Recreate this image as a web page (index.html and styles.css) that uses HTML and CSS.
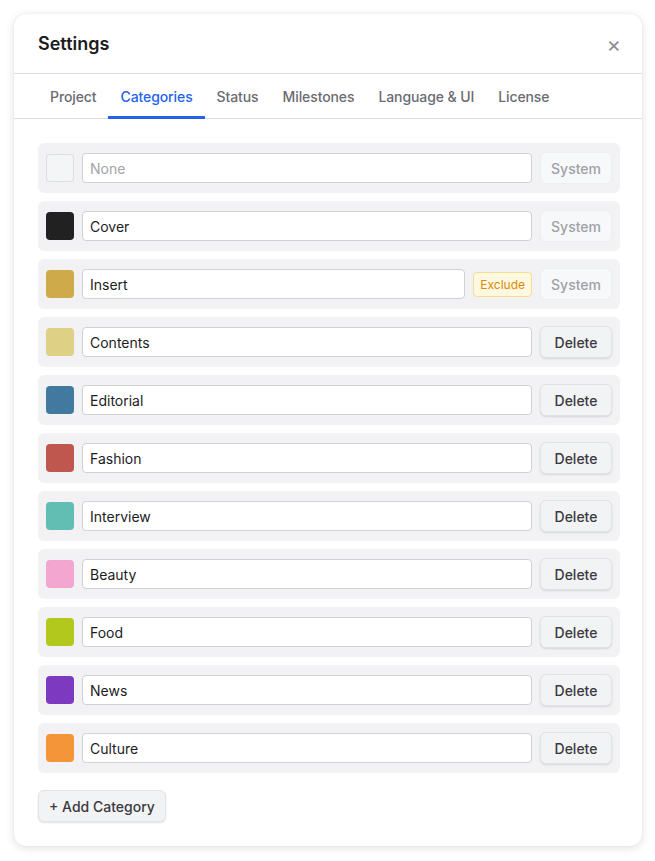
FILE: index.html
```html
<!DOCTYPE html>
<html lang="en">
<head>
    <meta charset="UTF-8">
    <meta name="viewport" content="width=device-width, initial-scale=1.0">
    <title>Settings</title>
    <link rel="stylesheet" href="styles.css">
</head>
<body>
    <div class="modal">
        <div class="modal-header">
            <h2>Settings</h2>
            <span class="close">&times;</span>
        </div>

        <div class="tabs">
            <div class="tab">Project</div>
            <div class="tab active">Categories</div>
            <div class="tab">Status</div>
            <div class="tab">Milestones</div>
            <div class="tab">Language &amp; UI</div>
            <div class="tab">License</div>
        </div>

        <div class="modal-body">
            <div class="cat-row">
                <span class="swatch empty"></span>
                <input type="text" class="cat-name" placeholder="None">
                <button class="btn system">System</button>
            </div>
            <div class="cat-row">
                <span class="swatch" style="background:#212121"></span>
                <input type="text" class="cat-name" value="Cover">
                <button class="btn system">System</button>
            </div>
            <div class="cat-row">
                <span class="swatch" style="background:#cfaa4b"></span>
                <input type="text" class="cat-name" value="Insert">
                <span class="tag-exclude">Exclude</span>
                <button class="btn system">System</button>
            </div>
            <div class="cat-row">
                <span class="swatch" style="background:#ded084"></span>
                <input type="text" class="cat-name" value="Contents">
                <button class="btn">Delete</button>
            </div>
            <div class="cat-row">
                <span class="swatch" style="background:#427a9f"></span>
                <input type="text" class="cat-name" value="Editorial">
                <button class="btn">Delete</button>
            </div>
            <div class="cat-row">
                <span class="swatch" style="background:#bf574f"></span>
                <input type="text" class="cat-name" value="Fashion">
                <button class="btn">Delete</button>
            </div>
            <div class="cat-row">
                <span class="swatch" style="background:#62bdb2"></span>
                <input type="text" class="cat-name" value="Interview">
                <button class="btn">Delete</button>
            </div>
            <div class="cat-row">
                <span class="swatch" style="background:#f3a6d0"></span>
                <input type="text" class="cat-name" value="Beauty">
                <button class="btn">Delete</button>
            </div>
            <div class="cat-row">
                <span class="swatch" style="background:#b3c81d"></span>
                <input type="text" class="cat-name" value="Food">
                <button class="btn">Delete</button>
            </div>
            <div class="cat-row">
                <span class="swatch" style="background:#7d3ac1"></span>
                <input type="text" class="cat-name" value="News">
                <button class="btn">Delete</button>
            </div>
            <div class="cat-row">
                <span class="swatch" style="background:#f4953a"></span>
                <input type="text" class="cat-name" value="Culture">
                <button class="btn">Delete</button>
            </div>

            <button class="btn add-btn">+ Add Category</button>
        </div>
    </div>
</body>
</html>
```

FILE: styles.css
```css
/* Global Styles */
* {
    box-sizing: border-box;
    margin: 0;
    padding: 0;
}

body {
    font-family: Inter, "Noto Sans", sans-serif;
    background: #ffffff;
    color: #1c1c1e;
    padding: 14px 13px 14px 14px;
}

.modal {
    width: 628px;
    background: #ffffff;
    border-radius: 12px;
    box-shadow: 0 2px 10px rgba(0, 0, 0, 0.12), 0 0 1px rgba(0, 0, 0, 0.15);
}

/* Header */
.modal-header {
    display: flex;
    justify-content: space-between;
    align-items: center;
    height: 60px;
    padding: 0 21px 0 24px;
    border-bottom: 1px solid #dcdcdf;
}

.modal-header h2 {
    font-size: 18px;
    font-weight: 600;
    color: #1c1c1e;
}

.close {
    color: #8e8e93;
    font-size: 22px;
    line-height: 1;
    cursor: pointer;
}

/* Tabs */
.tabs {
    display: flex;
    padding: 0 24px;
    border-bottom: 1px solid #dcdcdf;
}

.tab {
    padding: 14px 12px 11px;
    font-size: 14px;
    font-weight: 500;
    letter-spacing: -0.1px;
    color: #6b6b72;
    border-bottom: 3px solid transparent;
    margin-bottom: -1px;
}

.tab.active {
    color: #2563eb;
    border-bottom-color: #2563eb;
}

/* Body */
.modal-body {
    display: flex;
    flex-direction: column;
    gap: 8px;
    padding: 24px 22px 24px 24px;
}

.cat-row {
    display: flex;
    align-items: center;
    gap: 8px;
    height: 50px;
    padding: 0 8px;
    background: #f2f2f4;
    border-radius: 6px;
}

.swatch {
    width: 28px;
    height: 28px;
    border-radius: 4px;
    flex-shrink: 0;
}

.swatch.empty {
    background: #f4f5f7;
    border: 1px solid #dcdde0;
}

.cat-name {
    flex: 1;
    min-width: 0;
    height: 30px;
    padding: 0 7px;
    font-family: inherit;
    font-size: 14px;
    color: #1c1c1e;
    background: #ffffff;
    border: 1px solid #cfd0d4;
    border-radius: 4px;
}

.cat-name::placeholder {
    color: #a3a3a8;
}

.tag-exclude {
    padding: 4px 6px;
    font-size: 12px;
    color: #d98a06;
    background: #fff8e1;
    border: 1px solid #f6dd8c;
    border-radius: 4px;
}

/* Buttons */
.btn {
    height: 32px;
    width: 72px;
    font-family: inherit;
    font-size: 14px;
    font-weight: 500;
    color: #3a3a40;
    background: #f2f3f5;
    border: 1px solid #e2e3e6;
    border-radius: 6px;
    box-shadow: 0 1px 2px rgba(0, 0, 0, 0.12);
    cursor: pointer;
}

.btn.system {
    color: #a0a1a6;
    background: #f7f8fa;
    border-color: #eceef1;
    box-shadow: none;
}

.add-btn {
    align-self: flex-start;
    width: auto;
    padding: 0 10px;
    margin-top: 9px;
}
```
